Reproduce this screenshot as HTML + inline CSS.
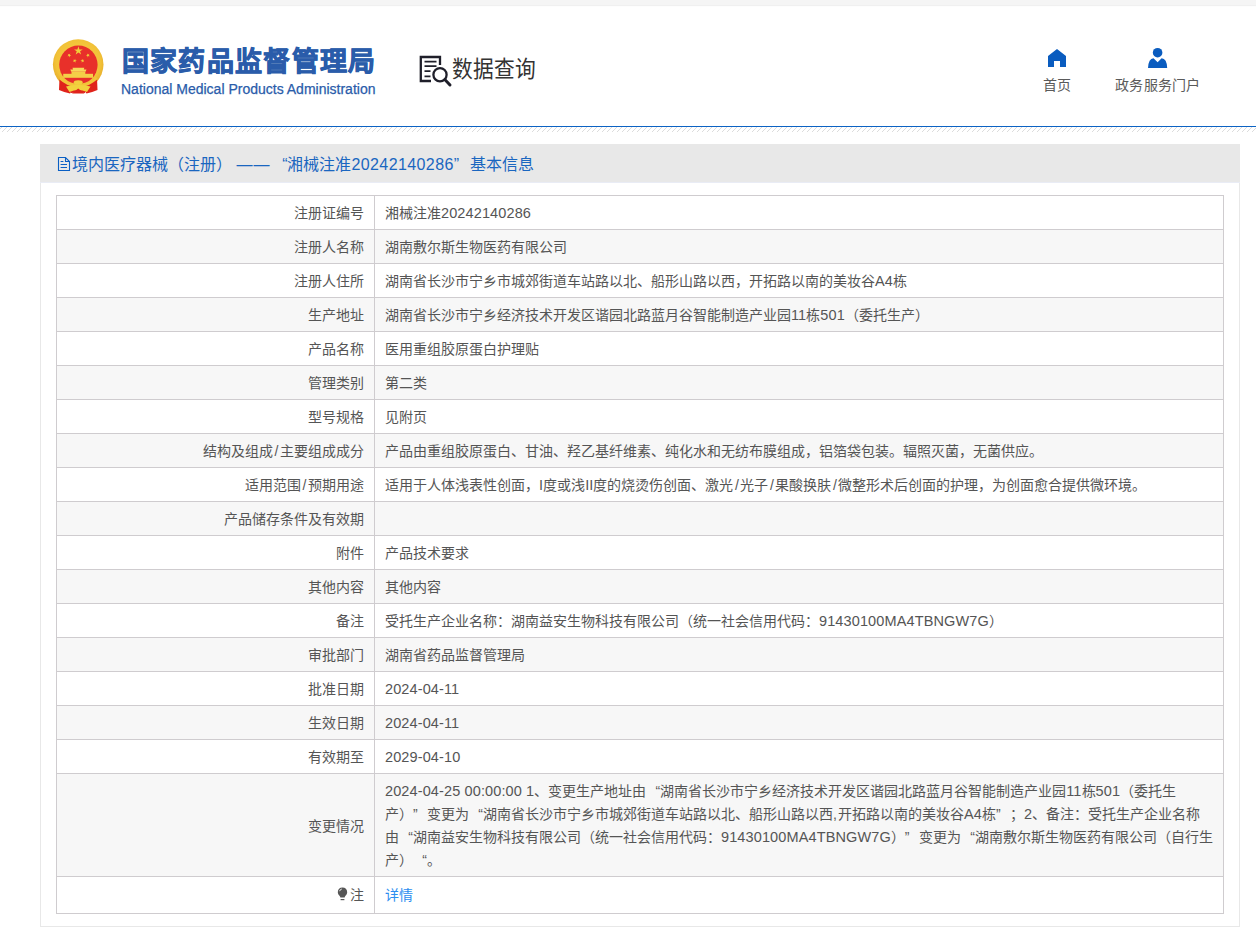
<!DOCTYPE html>
<html lang="zh-CN"><head><meta charset="utf-8">
<style>
*{margin:0;padding:0;box-sizing:border-box}
html,body{width:1256px;height:930px;overflow:hidden;background:#fff;font-family:"Liberation Sans",sans-serif;}
.topbar{position:absolute;left:0;top:0;width:1256px;height:5px;background:#f5f5f5;box-shadow:0 1px 1px rgba(0,0,0,0.06)}
.emblem{position:absolute;left:50px;top:36px;width:58px;height:60px}
.t1{position:absolute;left:121.5px;top:42px;font-size:27px;font-weight:900;color:#2a5caa;-webkit-text-stroke:0.8px #2a5caa;white-space:nowrap;line-height:40px;letter-spacing:1.35px}
.t2{position:absolute;left:121px;top:79.5px;font-size:14px;color:#2a5caa;-webkit-text-stroke:0.25px #2a5caa;white-space:nowrap;line-height:18px}
.sq{position:absolute;left:418px;top:54px;width:36px;height:34px}
.sqt{position:absolute;left:452px;top:53.5px;transform-origin:0 50%;transform:scaleX(0.92);font-size:22.5px;color:#333;line-height:32px;white-space:nowrap}
.nav{position:absolute;top:46px;text-align:center;font-size:14px;color:#5a5a5a;letter-spacing:0.3px;white-space:nowrap}
.nav span{position:absolute;left:0;top:30px;line-height:18px}
.bline{position:absolute;left:0;top:126px;width:1256px;height:1px;background:#0c63c4}
.hatch{position:absolute;left:0;top:127px;width:1256px;height:6px}
.panel{position:absolute;left:40px;top:144px;width:1200px;height:783px;border:1px solid #e8e8e8;border-top:none}
.phead{position:absolute;left:-1px;top:0;width:1200px;height:39px;background:#e8e8e8;border-bottom:1px solid #e9ecf5}
.ptitle{position:absolute;left:17px;top:10px;font-size:16px;color:#1a66c0;white-space:nowrap;line-height:22px}
.ptitle svg{position:absolute;left:0;top:2px}
.ptitle .tx{position:absolute;left:15px;top:0}
table{position:absolute;left:15px;top:51px;width:1168px;border-collapse:collapse;font-size:14px;color:#555;table-layout:fixed}
td{border:1px solid #cfcccf;padding:6px 10px 4px;line-height:23px;white-space:nowrap;overflow:hidden;height:34px}
td.l{text-align:right}
tr:nth-child(even) td{background:#f7f7f7}
a{color:#2b8ef0;text-decoration:none}
.lq{display:inline-block;width:14px;text-align:right}
.n{letter-spacing:0.12px;font-size:14.5px}
.sl{display:inline-block;width:7px;text-align:center}
.cm{display:inline-block;width:5px}
.bulb{display:inline-block;vertical-align:-1px;margin-right:2px}
tr.last td{height:37px;padding-top:5px;padding-bottom:5px}
.rq{display:inline-block;width:14px;text-align:left}
.n2{letter-spacing:0.4px}
.lq2{display:inline-block;width:17px;text-align:right}
.rq2{display:inline-block;width:16px;text-align:left}
</style></head><body>
<div class="topbar"></div>
<svg class="emblem" viewBox="0 0 58 60">
  <defs><radialGradient id="gg" cx="50%" cy="45%" r="55%"><stop offset="0" stop-color="#f7d24a"/><stop offset="0.8" stop-color="#f2c238"/><stop offset="1" stop-color="#e6ac2a"/></radialGradient></defs>
  <circle cx="28.2" cy="28.5" r="25.3" fill="url(#gg)"/>
  <circle cx="28.4" cy="28.8" r="19.2" fill="#e8302a"/>
  <polygon points="28.40,10.20 29.43,13.38 32.77,13.38 30.07,15.34 31.10,18.52 28.40,16.56 25.70,18.52 26.73,15.34 24.03,13.38 27.37,13.38" fill="#f1d03a"/>
  <polygon points="20.25,17.48 19.93,18.97 21.25,19.74 19.74,19.90 19.42,21.39 18.80,19.99 17.28,20.15 18.42,19.13 17.79,17.74 19.12,18.50" fill="#f1d03a"/>
  <polygon points="36.95,17.48 38.08,18.50 39.41,17.74 38.78,19.13 39.92,20.15 38.40,19.99 37.78,21.39 37.46,19.90 35.95,19.74 37.27,18.97" fill="#f1d03a"/>
  <polygon points="25.24,22.77 25.32,24.30 26.80,24.69 25.37,25.24 25.45,26.76 24.49,25.57 23.07,26.12 23.90,24.84 22.94,23.66 24.41,24.05" fill="#f1d03a"/>
  <polygon points="31.96,22.77 32.79,24.05 34.26,23.66 33.30,24.84 34.13,26.12 32.71,25.57 31.75,26.76 31.83,25.24 30.40,24.69 31.88,24.30" fill="#f1d03a"/>
  <path d="M22.5 31.7 H34.3 L33.8 33.6 H36.5 L35.5 35.8 H21.3 L20.3 33.6 H23 Z" fill="#f7d85a"/>
  <rect x="21.5" y="35.8" width="13.8" height="2.2" fill="#f4cf48"/>
  <rect x="13.2" y="37.8" width="29.8" height="4" fill="#f4d048"/>
  <path d="M9.5 42 Q12 45 19 47 L24 52 L20 57.6 Q14 56 9 54 Z" fill="#e0231c"/>
  <path d="M47 42 Q44.5 45 37.5 47 L32.5 52 L36.5 57.6 Q42.5 56 47.5 54 Z" fill="#e0231c"/>
  <path d="M20 50 Q28 54 36.5 50 L35 57 Q28 56 21 57 Z" fill="#e0231c"/>
  <path d="M9.7 42 Q20 51 28.2 49 Q36.5 51 46.8 42" fill="none" stroke="#f2c53a" stroke-width="2.8"/>
  <path d="M16 50.5 Q28 47 40.5 50.5 L37 56 Q28 52 19.5 56 Z" fill="#f2d23e"/>
  <path d="M22 57.5 L28.2 52.5 L34.5 57.5 Z" fill="#e0231c"/>
  <ellipse cx="28.2" cy="46.5" rx="4.5" ry="2.2" fill="#f2cf3e"/>
</svg>
<div class="t1">国家药品监督管理局</div>
<div class="t2">National Medical Products Administration</div>
<svg class="sq" viewBox="0 0 36 34">
  <path d="M13 27 L2.8 27 L2.8 3 L22 3 L22 11" fill="none" stroke="#1f1f2a" stroke-width="2.3"/>
  <path d="M6.5 7.7h12M6.5 12.1h12M6.5 17.2h6M6.5 22.3h6" stroke="#1f1f2a" stroke-width="1.8"/>
  <circle cx="22" cy="20.7" r="6.6" fill="none" stroke="#1f1f2a" stroke-width="2.3"/>
  <path d="M27 25.7 L32 31" stroke="#1f1f2a" stroke-width="3" stroke-linecap="round"/>
</svg>
<div class="sqt">数据查询</div>
<div class="nav" style="left:1043px;width:28px">
  <svg style="position:absolute;left:4px;top:2px" width="20" height="20" viewBox="0 0 20 20"><path d="M1 8 L10 1 L19 8 L19 19 L13 19 L13 13 L7 13 L7 19 L1 19 Z" fill="#0a5cbf"/></svg>
  <span>首页</span>
</div>
<div class="nav" style="left:1115px;width:84px">
  <svg style="position:absolute;left:32px;top:1px" width="22" height="24" viewBox="0 0 22 24"><circle cx="10.6" cy="5.7" r="4.8" fill="#0a5cbf"/><path d="M1 21 Q1.5 11.5 6.5 11.3 L10.6 15.3 L14.6 11.3 Q19.8 11.5 20.2 21 Z" fill="#0a5cbf"/></svg>
  <span>政务服务门户</span>
</div>
<div class="bline"></div>
<svg class="hatch" width="1256" height="6"><defs><pattern id="hp" width="5" height="5" patternUnits="userSpaceOnUse" x="2" y="0"><path d="M-1 6 L6 -1" stroke="#d8d8d8" stroke-width="0.9"/></pattern></defs><rect width="1256" height="5" fill="url(#hp)"/></svg>
<div class="panel">
  <div class="phead"><div class="ptitle">
    <svg width="14" height="16" viewBox="0 0 14 16"><path d="M1.5 1.5 H8.5 L12.5 5.5 V14.5 H1.5 Z M8.5 1.5 V5.5 H12.5" fill="none" stroke="#0a5fc4" stroke-width="1.1"/><path d="M3.6 5.5 H6.4 M3.6 8.5 H10 M3.6 11.5 H10" stroke="#0a5fc4" stroke-width="1.1"/></svg>
    <span class="tx">境内医疗器械（注册） <span style="letter-spacing:1px">——</span><span class="lq2">“</span>湘械注准<span class="n2">20242140286</span><span class="rq2">”</span>基本信息</span>
  </div></div>
  <table>
    <colgroup><col style="width:318px"><col></colgroup>
<tr><td class="l">注册证编号</td><td>湘械注准<span class="n">20242140286</span></td></tr>
<tr><td class="l">注册人名称</td><td>湖南敷尔斯生物医药有限公司</td></tr>
<tr><td class="l">注册人住所</td><td>湖南省长沙市宁乡市城郊街道车站路以北、船形山路以西，开拓路以南的美妆谷<span class="n">A4</span>栋</td></tr>
<tr><td class="l">生产地址</td><td>湖南省长沙市宁乡经济技术开发区谐园北路蓝月谷智能制造产业园<span class="n">11</span>栋<span class="n">501</span>（委托生产）</td></tr>
<tr><td class="l">产品名称</td><td>医用重组胶原蛋白护理贴</td></tr>
<tr><td class="l">管理类别</td><td>第二类</td></tr>
<tr><td class="l">型号规格</td><td>见附页</td></tr>
<tr><td class="l">结构及组成<span class="sl">/</span>主要组成成分</td><td>产品由重组胶原蛋白、甘油、羟乙基纤维素、纯化水和无纺布膜组成，铝箔袋包装。辐照灭菌，无菌供应。</td></tr>
<tr><td class="l">适用范围<span class="sl">/</span>预期用途</td><td>适用于人体浅表性创面，<span class="n">I</span>度或浅<span class="n">II</span>度的烧烫伤创面、激光<span class="sl">/</span>光子<span class="sl">/</span>果酸换肤<span class="sl">/</span>微整形术后创面的护理，为创面愈合提供微环境。</td></tr>
<tr><td class="l">产品储存条件及有效期</td><td></td></tr>
<tr><td class="l">附件</td><td>产品技术要求</td></tr>
<tr><td class="l">其他内容</td><td>其他内容</td></tr>
<tr><td class="l">备注</td><td>受托生产企业名称：湖南益安生物科技有限公司（统一社会信用代码：<span class="n">91430100MA4TBNGW7G</span>）</td></tr>
<tr><td class="l">审批部门</td><td>湖南省药品监督管理局</td></tr>
<tr><td class="l">批准日期</td><td><span class="n">2024-04-11</span></td></tr>
<tr><td class="l">生效日期</td><td><span class="n">2024-04-11</span></td></tr>
<tr><td class="l">有效期至</td><td><span class="n">2029-04-10</span></td></tr>
<tr><td class="l">变更情况</td><td><span class="n">2024-04-25 00:00:00 1</span>、变更生产地址由<span class="lq">“</span>湖南省长沙市宁乡经济技术开发区谐园北路蓝月谷智能制造产业园<span class="n">11</span>栋<span class="n">501</span>（委托生<br>产）<span class="rq">”</span>变更为<span class="lq">“</span>湖南省长沙市宁乡市城郊街道车站路以北、船形山路以西<span class="cm">,</span>开拓路以南的美妆谷<span class="n">A4</span>栋<span class="rq">”</span>；<span class="n">2</span>、备注：受托生产企业名称<br>由<span class="lq">“</span>湖南益安生物科技有限公司（统一社会信用代码：<span class="n">91430100MA4TBNGW7G</span>）<span class="rq">”</span>变更为<span class="lq">“</span>湖南敷尔斯生物医药有限公司（自行生<br>产）<span class="lq">“</span>。</td></tr>
<tr class="last"><td class="l"><svg class="bulb" width="11" height="14" viewBox="0 0 11 14"><path d="M5.5 0.6 C8.3 0.6 10.2 2.6 10.2 5.2 C10.2 7.2 8.8 8.3 8 9.4 L7.6 10.6 H3.4 L3 9.4 C2.2 8.3 0.8 7.2 0.8 5.2 C0.8 2.6 2.7 0.6 5.5 0.6 Z" fill="#555"/><path d="M2.6 4.2 Q3 2.4 4.8 2" stroke="#fff" stroke-width="0.9" fill="none"/><rect x="3.6" y="12" width="3.8" height="1.2" fill="#555"/></svg>注</td><td><a>详情</a></td></tr>
</table>
</div>
</body></html>
